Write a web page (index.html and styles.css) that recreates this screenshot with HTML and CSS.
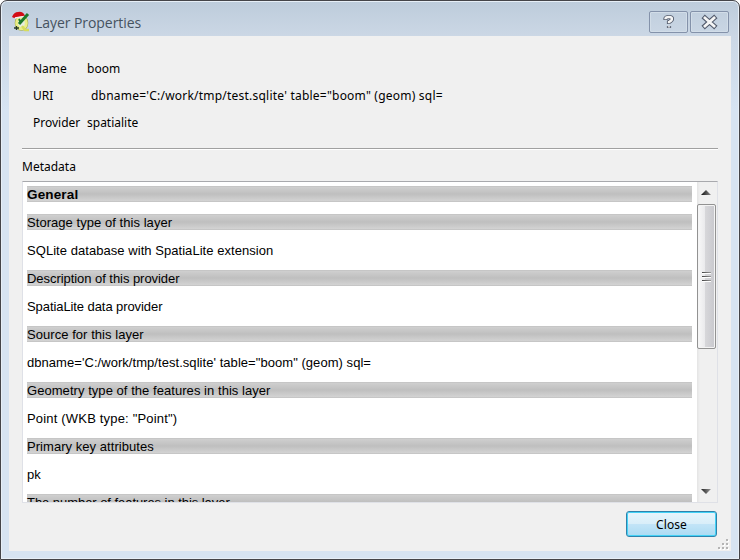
FILE: index.html
```html
<!DOCTYPE html>
<html lang="en">
<head>
<meta charset="utf-8">
<title>Layer Properties</title>
<link rel="stylesheet" href="styles.css">
</head>
<body>
<div class="window">
  <header class="titlebar">
    <svg class="app-icon" width="18" height="21" viewBox="0 0 18 21">
      <ellipse cx="9.500" cy="12" rx="4.800" ry="5.800" fill="none" stroke="#a0a94f" stroke-width="4"/>
      <ellipse cx="9.500" cy="12" rx="4.800" ry="5.800" fill="#e5eddd" stroke="#e9ee86" stroke-width="3"/>
      <path d="M10 15l3 4h4" fill="none" stroke="#d5dc5c" stroke-width="2.500"/>
      <path d="M0 6Q2 1 6 1Q11 0 13 5L6 6L2 7z" fill="#d30d15"/>
      <path d="M3 7L12 5.500" stroke="#f4eeee" stroke-width="1.500"/>
      <path d="M7 13L16 3" stroke="#1d7a2b" stroke-width="3"/>
      <path d="M7 8l2 4" stroke="#1d7a2b" stroke-width="2"/>
      <path d="M2 17h5M4.500 15v4" stroke="#263b24" stroke-width="1.300"/>
    </svg>
    <h1 class="title">Layer Properties</h1>
    <div class="controls">
      <div class="control"><svg width="37" height="20" viewBox="0 0 37 20">
        <path d="M15.500 8V6.500Q16 5 19 5Q22 5 22 7Q22 8.500 19 10V12M19 14v2" fill="none" stroke="#535b6c" stroke-width="4.200"/>
        <path d="M15.500 7.300V6.500Q16 5 19 5Q22 5 22 7Q22 8.500 19 10V11.300M19 14.300v1.200" fill="none" stroke="#f5f5f5" stroke-width="2.400"/>
      </svg></div>
      <div class="control"><svg width="37" height="20" viewBox="0 0 37 20">
        <path d="M14 6L23 14M23 6L14 14" stroke="#535b6c" stroke-width="5" stroke-linecap="square"/>
        <path d="M14 6L23 14M23 6L14 14" stroke="#f5f5f5" stroke-width="2.800" stroke-linecap="square"/>
      </svg></div>
    </div>
  </header>
  <main class="content">
    <dl class="summary">
      <dt>Name</dt><dd>boom</dd>
      <dt>URI</dt><dd class="uri">dbname='C:/work/tmp/test.sqlite' table="boom" (geom) sql=</dd>
      <dt>Provider</dt><dd>spatialite</dd>
    </dl>
    <hr class="rule">
    <div class="caption">Metadata</div>
    <section class="viewer">
      <div class="document">
        <h2 class="band general">General</h2>
        <h3 class="band">Storage type of this layer</h3>
        <p>SQLite database with SpatiaLite extension</p>
        <h3 class="band tight">Description of this provider</h3>
        <p class="provider">SpatiaLite data provider</p>
        <h3 class="band">Source for this layer</h3>
        <p>dbname='C:/work/tmp/test.sqlite' table="boom" (geom) sql=</p>
        <h3 class="band">Geometry type of the features in this layer</h3>
        <p class="geometry">Point (WKB type: "Point")</p>
        <h3 class="band">Primary key attributes</h3>
        <p>pk</p>
        <h3 class="band tight">The number of features in this layer</h3>
      </div>
      <div class="scrollbar">
        <div class="arrow"><svg width="10" height="6" viewBox="0 0 10 6"><defs><linearGradient id="up"><stop stop-color="#111"/><stop offset="1" stop-color="#888"/></linearGradient></defs><path d="M0 5L5 0l5 5z" fill="url(#up)"/></svg></div>
        <div class="thumb"><i></i><i></i><i></i></div>
        <div class="arrow down"><svg width="10" height="6" viewBox="0 0 10 6"><defs><linearGradient id="dn"><stop stop-color="#222"/><stop offset="1" stop-color="#999"/></linearGradient></defs><path d="M0 0h10L5 5z" fill="url(#dn)"/></svg></div>
      </div>
    </section>
    <footer class="footer"><button class="close">Close</button></footer>
    <svg class="grip" width="11" height="11" viewBox="0 0 11 11"><path d="M8 0h2v2h-2zM4 4h2v2h-2zM8 4h2v2h-2zM0 8h2v2h-2zM4 8h2v2h-2zM8 8h2v2h-2z" fill="#fff" transform="translate(1 1)"/><path d="M8 0h2v2h-2zM4 4h2v2h-2zM8 4h2v2h-2zM0 8h2v2h-2zM4 8h2v2h-2zM8 8h2v2h-2z" fill="#b5b5b5"/></svg>
  </main>
</div>
</body>
</html>
```
FILE: styles.css
```css
* { box-sizing: border-box; }
body { margin: 0; background: #fff; font: 12px/16px "Noto Sans", sans-serif; color: #000; }
h1, h2, h3, p, dl, dd { margin: 0; font-weight: normal; }
.window { width: 740px; height: 560px; padding: 0 8px 8px; overflow: hidden; border: 1px solid #454549; border-radius: 7px 7px 0 0; background: linear-gradient(#bdccdb, #cbd7e5 35px, #d7e4f2 110px); box-shadow: inset 0 0 0 1px #e7eff7; }
.titlebar { display: flex; height: 35px; padding-left: 3px; }
.app-icon { margin-top: 10px; }
.title { margin: 12px 0 0 5px; font: 14px/20px "Open Sans", sans-serif; letter-spacing: -0.06px; color: #45525f; white-space: nowrap; }
.controls { display: flex; gap: 2px; margin: 10px 2px 0 auto; }
.control { width: 39px; height: 22px; border: 1px solid #8492aa; border-radius: 2px; box-shadow: inset 0 0 0 1px #d2dde8; }
.control svg { display: block; }
.content { position: relative; height: 515px; padding: 19px 13px 0; background: #f0f0f0; }
.summary { display: grid; grid-template: repeat(3, 27px) / 54px 1fr; padding-left: 11px; line-height: 27px; white-space: nowrap; }
.uri { padding-left: 4px; letter-spacing: 0.22px; }
.rule { height: 2px; margin: 12px 0 9px; border: 0; border-top: 1px solid #a0a0a0; background: #fff; }
.caption { height: 22px; }
.viewer { display: flex; height: 322px; border: 1px solid #dfe1e7; border-top-color: #a8a9ad; background: #fff; overflow: hidden; }
.document { flex: 1; padding: 4px 5px 0 4px; font: 13px/18px "Liberation Sans", sans-serif; letter-spacing: 0.05px; white-space: nowrap; }
.document > * { height: 16px; margin-bottom: 12px; font-size: 13px; }
.document .band { background: linear-gradient(#cfcfcf, #bfbfbf 50%, #d3d3d3); border: solid #c6c6c6; border-width: 1px 0; line-height: 15px; }
.document .general { font-weight: bold; font-size: 13.5px; letter-spacing: 0.15px; }
.document .tight { letter-spacing: -0.05px; }
.document .provider { letter-spacing: -0.08px; }
.document .geometry { letter-spacing: 0.18px; }
.scrollbar { display: flex; flex-direction: column; width: 20px; padding-right: 1px; background: linear-gradient(90deg, #e4e4e4, #f0f0f0 3px); }
.arrow { height: 22px; padding: 8px 0 0 4px; }
.arrow svg { display: block; }
.down { margin-top: auto; height: 15px; padding-top: 2px; }
.thumb { display: flex; flex-direction: column; justify-content: center; align-items: center; gap: 2px; height: 145px; border: 1px solid #929292; border-radius: 2px; background: linear-gradient(90deg, #f8f8f8, #eaeaec 40%, #d7d7da 42%, #c8c8cd); box-shadow: inset 0 0 0 1px #f4f4f4; }
.thumb i { width: 9px; height: 2px; background: linear-gradient(90deg, #444, #999); border-bottom: 1px solid #fff; }
.footer { display: flex; justify-content: flex-end; padding: 8px 1px 0 0; }
.close { width: 91px; height: 26px; padding: 2px 0 0; border: 1px solid #3082ab; border-radius: 3px; background: linear-gradient(#e9f5fc, #d8eef9 50%, #c2e4f7 52%, #abdbf3); box-shadow: inset 0 0 0 1px #43d2f6; font: inherit; letter-spacing: 0.1px; color: #000; }
.grip { position: absolute; right: 2px; bottom: 1px; }
```
